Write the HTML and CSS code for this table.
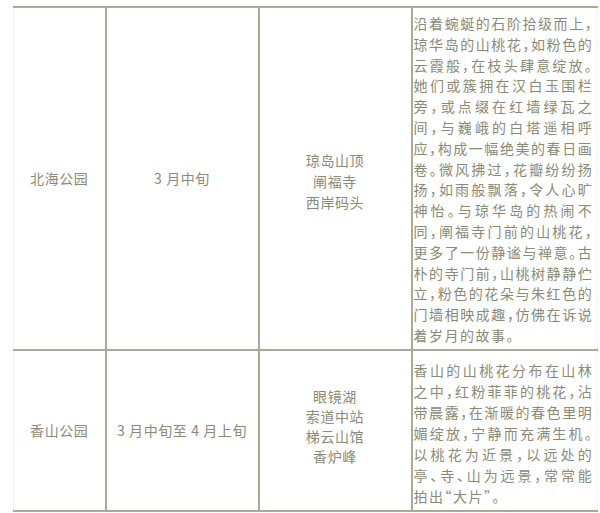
FILE: index.html
```html
<!DOCTYPE html>
<html lang="zh-CN">
<head>
<meta charset="utf-8">
<title>北京山桃花观赏地</title>
<link rel="stylesheet" href="styles.css">
</head>
<body>
<table class="flowers">
  <colgroup>
    <col class="c-park">
    <col class="c-time">
    <col class="c-spot">
    <col class="c-desc">
  </colgroup>
  <tbody>
    <tr class="row-beihai">
      <td class="cell-center">北海公园</td>
      <td class="cell-center">3 月中旬</td>
      <td class="cell-center cell-spots">琼岛山顶<br>阐福寺<br>西岸码头</td>
      <td class="cell-desc"><div class="desc-text">沿着蜿蜒的石阶拾级而上，琼华岛的山桃花，如粉色的云霞般，在枝头肆意绽放。她们或簇拥在汉白玉围栏旁，或点缀在红墙绿瓦之间，与巍峨的白塔遥相呼应，构成一幅绝美的春日画卷。微风拂过，花瓣纷纷扬扬，如雨般飘落，令人心旷神怡。与琼华岛的热闹不同，阐福寺门前的山桃花，更多了一份静谧与禅意。古朴的寺门前，山桃树静静伫立，粉色的花朵与朱红色的门墙相映成趣，仿佛在诉说着岁月的故事。</div></td>
    </tr>
    <tr class="row-xiangshan">
      <td class="cell-center">香山公园</td>
      <td class="cell-center">3 月中旬至 4 月上旬</td>
      <td class="cell-center cell-spots">眼镜湖<br>索道中站<br>梯云山馆<br>香炉峰</td>
      <td class="cell-desc"><div class="desc-text">香山的山桃花分布在山林之中，红粉菲菲的桃花，沾带晨露，在渐暖的春色里明媚绽放，宁静而充满生机。以桃花为近景，以远处的亭、寺、山为远景，常常能拍出“大片”。</div></td>
    </tr>
  </tbody>
</table>
</body>
</html>
```

FILE: styles.css
```css
html, body {
  margin: 0;
  padding: 0;
  background: #ffffff;
}

body {
  font-family: "Noto Sans CJK SC", "Liberation Serif", serif;
  color: #8a8a76;
  font-size: 14px;
}

.flowers {
  margin: 6px 0 0 13px;
  width: 584px;
  border-collapse: collapse;
  table-layout: fixed;
}

.c-park { width: 92px; }
.c-time { width: 153px; }
.c-spot { width: 153px; }
.c-desc { width: 186px; }

.flowers td {
  border-top: 2px solid #aaaa98;
  border-bottom: 2px solid #aaaa98;
  border-left: 2px solid #aaaa98;
  padding: 0;
  letter-spacing: 0.6px;
}

.flowers td:first-child {
  border-left: 1px solid #f2f2ec;
}

.flowers td:last-child {
  border-right: 1px solid #f4f4ee;
}

.cell-center {
  text-align: center;
  vertical-align: middle;
  line-height: 21px;
}

.flowers td.cell-desc {
  vertical-align: top;
  padding: 5px 0 3px 1px;
}

.desc-text {
  width: 179.75px;
  text-align: justify;
  letter-spacing: 1.5px;
  line-height: 20.8px;
  font-feature-settings: "halt" 1;
}

.row-xiangshan td.cell-desc {
  padding-top: 9px;
  padding-bottom: 3px;
}

.row-xiangshan .desc-text {
  line-height: 21px;
}

.row-beihai .cell-spots {
  padding-top: 6px;
}

.row-xiangshan .cell-spots {
  padding-bottom: 8px;
  line-height: 20px;
}
```
